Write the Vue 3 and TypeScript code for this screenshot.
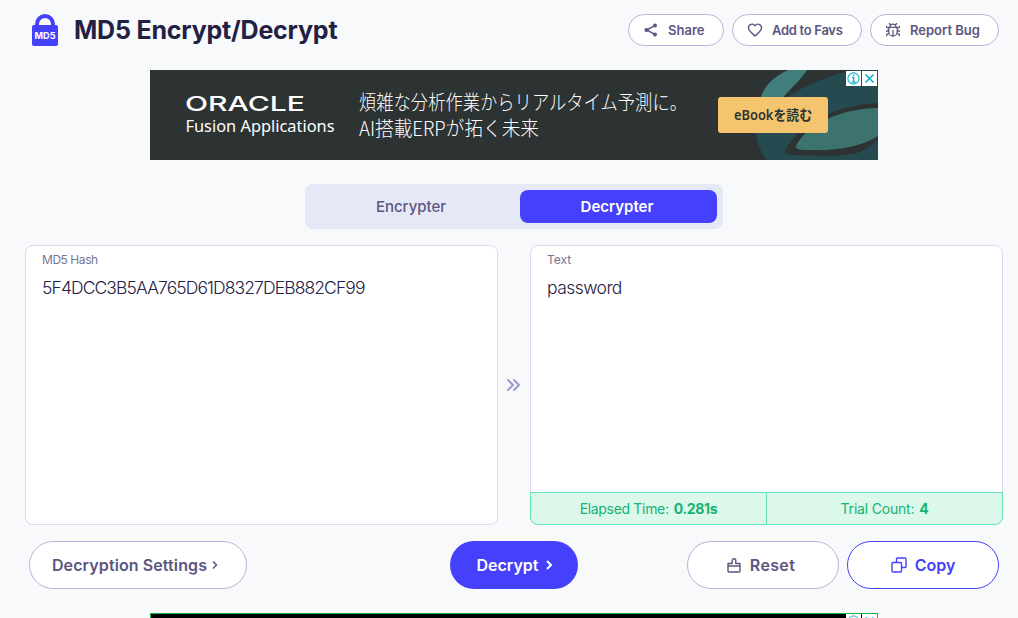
<script setup lang="ts">
import { ref } from 'vue'

type Mode = 'Encrypter' | 'Decrypter'
const modes: Mode[] = ['Encrypter', 'Decrypter']
const active = ref<Mode>('Decrypter')
const hash = ref('5F4DCC3B5AA765D61D8327DEB882CF99')
const result = ref('password')
</script>

<template>
  <div class="page">
    <header class="header">
      <svg class="logo" width="26" height="32" viewBox="0 0 26 32">
        <path d="M5 13V10a8 8 0 0 1 16 0V13" fill="none" stroke="#4540fb" stroke-width="4" />
        <rect y="11" width="26" height="21" rx="2" fill="#4540fb" />
        <text x="2.6" y="25.2" class="logo-text" textLength="21" lengthAdjust="spacingAndGlyphs">MD5</text>
      </svg>
      <h1 class="title">MD5 Encrypt/Decrypt</h1>
      <nav class="actions">
        <button class="pill share">
          <svg width="16" height="16" viewBox="0 0 16 16">
            <path d="M12 3.6 3.6 8 12 12.4" fill="none" stroke="currentColor" stroke-width="1.5" />
            <g fill="currentColor"><circle cx="12" cy="3.5" r="2" /><circle cx="3.4" cy="8" r="2" /><circle cx="12" cy="12.5" r="2" /></g>
          </svg>
          <span>Share</span>
        </button>
        <button class="pill favs">
          <svg width="16" height="16" viewBox="0 0 16 16" fill="none" stroke="currentColor" stroke-width="1.4" stroke-linejoin="round">
            <path d="M8 14C5 11.5 1.4 8.8 1.4 5.6A3.6 3.6 0 0 1 8 3.8a3.6 3.6 0 0 1 6.6 1.8C14.600 8.800 11 11.500 8 14Z" />
          </svg>
          <span>Add to Favs</span>
        </button>
        <button class="pill bug">
          <svg width="16" height="16" viewBox="0 0 16 16" fill="none" stroke="currentColor" stroke-width="1.3">
            <path d="M3.800 5.300h8.400v4.600a4.200 4.200 0 0 1-8.400 0ZM4.900 5.300a3.100 3.100 0 0 1 6.200 0M4 1.200l2 2M12 1.200l-2 2M8 8v6M3.800 6.700 1.600 5.200V3.800M12.200 6.700l2.200-1.500V3.800M1 9h2.800M12.200 9H15M4.200 11.200l-2.500 1.300v1.800M11.800 11.200l2.500 1.300v1.800" />
          </svg>
          <span>Report Bug</span>
        </button>
      </nav>
    </header>

    <section class="ad">
      <svg width="728" height="90" viewBox="0 0 728 90">
        <rect width="728" height="90" fill="#2d3232" />
        <path d="M728 0H704C664 8 619 32 606 58c0 13 4 24 11 32H728Z" fill="#254a50" />
        <path d="M638 0C620 9 612 18 609 35l17 1C638 20 652 9 657 0Z" fill="#417e7b" />
        <path d="M728 33C681 36 649 55 635 80c-2 7 14 5 38 6 27 0 44-5 55-10Z" fill="#2d3232" />
        <path d="M728 38c-42 1-72 18-82 38-1 3 3 4 11 4 30 1 54-3 71-14Z" fill="#3d736f" />
        <path d="M728 70v20H690C706 84 718 79 728 70Z" fill="#254a50" />
        <text x="35" y="41" class="oracle" textLength="120" lengthAdjust="spacingAndGlyphs">ORACLE</text>
        <text x="35.500" y="61.500" class="fusion" textLength="149" lengthAdjust="spacingAndGlyphs">Fusion Applications</text>
        <text x="209" y="39.500" class="copy" textLength="328" lengthAdjust="spacingAndGlyphs">煩雑な分析作業からリアルタイム予測に。</text>
        <text x="209" y="66" class="copy" textLength="180" lengthAdjust="spacingAndGlyphs">AI搭載ERPが拓く未来</text>
        <rect x="568" y="27" width="110" height="36" rx="3" fill="#f4c56e" />
        <text x="584" y="50" class="ebook" textLength="78" lengthAdjust="spacingAndGlyphs">eBookを読む</text>
        <path d="M696 1h15v15h-15ZM712 1h15v15h-15Z" fill="#fff" />
        <g fill="none" stroke="#18aec9">
          <circle cx="703.500" cy="8.500" r="5.600" stroke-width="1.100" />
          <path d="M702 7.500h1.700V12M702 12h3.500M703.700 4.600v1.500" stroke-width="1.300" />
          <path d="m715.500 4.500 8 8m0-8-8 8" stroke-width="1.700" />
        </g>
      </svg>
    </section>

    <div class="tabs">
      <button v-for="m in modes" :key="m" class="tab" :class="{ active: m === active }" @click="active = m">{{ m }}</button>
    </div>

    <main class="panels">
      <section class="panel">
        <div class="label">MD5 Hash</div>
        <div class="value hash">{{ hash }}</div>
      </section>
      <svg class="arrows" width="14" height="14" viewBox="0 0 14 14" fill="none" stroke="#9f9bcb" stroke-width="2" stroke-linecap="round" stroke-linejoin="round">
        <path d="m1 2 5 5-5 5M7 2l5 5-5 5" />
      </svg>
      <section class="panel output">
        <div class="label text-label">Text</div>
        <div class="value password">{{ result }}</div>
        <div class="stats">
          <div class="stat"><span class="elapsed">Elapsed Time:</span><b>0.281s</b></div>
          <div class="stat"><span class="trial">Trial Count:</span><b>4</b></div>
        </div>
      </section>
    </main>

    <footer class="footer">
      <button class="big settings">
        <span>Decryption Settings</span>
        <svg width="6" height="10" viewBox="0 0 6 10" fill="none" stroke="currentColor" stroke-width="1.500"><path d="m1 1.500 3.500 3.500L1 8.500" /></svg>
      </button>
      <button class="big decrypt">
        <span>Decrypt</span>
        <svg width="7" height="10" viewBox="0 0 7 10" fill="none" stroke="currentColor" stroke-width="2"><path d="m1 1 4 4-4 4" /></svg>
      </button>
      <button class="big reset">
        <svg width="14" height="15" viewBox="0 0 14 15" fill="none" stroke="currentColor" stroke-width="1.400" stroke-linejoin="round">
          <path d="M1 8V5.500h4.200V2.500a1.800 1.800 0 0 1 3.600 0v3H13V8ZM1 8v5a1 1 0 0 0 1 1h10a1 1 0 0 0 1-1V8" />
        </svg>
        <span>Reset</span>
      </button>
      <button class="big copy-btn">
        <svg width="16" height="16" viewBox="0 0 16 16" fill="none" stroke="currentColor" stroke-width="1.400">
          <rect x="1" y="5.500" width="9.500" height="9.500" rx="1" /><path d="M5.500 5.500V2a1 1 0 0 1 1-1H14a1 1 0 0 1 1 1v7.500a1 1 0 0 1-1 1h-3.500" />
        </svg>
        <span>Copy</span>
      </button>
    </footer>

    <section class="bottom-ad">
      <svg width="31" height="16" viewBox="0 0 31 16">
        <path d="M0 0h15v16H0ZM16 0h15v16H16Z" fill="#fff" />
        <g fill="none" stroke="#18aec9"><circle cx="7.500" cy="7.500" r="5.600" /><path d="m19.500 3.500 8 8m0-8-8 8" stroke-width="1.700" /></g>
      </svg>
    </section>
  </div>
</template>

<style>
html, body { background: #f7f9fb; overflow: hidden; }
</style>

<style scoped>
* { box-sizing: border-box; }
.page { height: 618px; overflow: hidden; display: flex; flex-direction: column; font-family: Inter, "Noto Sans", sans-serif; background: #f7f9fb; color: #5b567f; }
.page > * { flex: none; }
.header { height: 70px; padding: 14px 19px 0 32px; display: flex; align-items: flex-start; }
.logo-text { font: 700 9px Inter, sans-serif; fill: #fff; }
.title { margin: 0 0 0 16px; font: 700 25px/32px Inter, sans-serif; letter-spacing: -0.2px; color: #232143; white-space: nowrap; }
.actions { margin-left: auto; display: flex; gap: 8px; }
button { font-family: inherit; color: inherit; margin: 0; white-space: nowrap; }
.pill { height: 32px; border: 1px solid #b8b3dd; border-radius: 16px; background: #fff; padding: 0 0 0 14px; display: flex; align-items: center; gap: 9px; font-size: 13px; font-weight: 600; }
.share { width: 96px; }
.favs { width: 130px; letter-spacing: -0.3px; }
.bug { width: 129px; }
.ad { width: 728px; height: 90px; margin-left: 150px; }
.ad svg { display: block; }
.oracle { font: 500 20.5px Inter, sans-serif; fill: #fff; }
.fusion { font: 400 17px "Noto Sans", sans-serif; fill: #fff; }
.copy { font: 300 20px "Noto Sans CJK JP", sans-serif; fill: #fff; }
.ebook { font: 600 14px "Noto Sans", "Noto Sans CJK JP", sans-serif; fill: #2d3232; }
.tabs { width: 418px; height: 45px; margin: 24px 0 0 305px; padding: 6px; border-radius: 8px; background: #e5e8f7; display: grid; grid-template-columns: 197px 197px; justify-content: space-between; }
.tab { border: 0; border-radius: 8px; background: none; padding: 0 0 0 3px; font-size: 15px; font-weight: 500; }
.tab.active { background: #4540fb; color: #fff; font-weight: 600; padding: 0 3px 0 0; }
.panels { height: 280px; margin: 16px 15px 0 25px; display: flex; align-items: stretch; }
.panel { width: 473px; border: 1px solid #dcd9ef; border-radius: 8px; background: #fff; padding: 5px 16px 0; display: flex; flex-direction: column; }
.label { font-size: 12px; line-height: 18px; letter-spacing: -0.45px; color: #777394; }
.text-label { letter-spacing: 0; }
.value { margin-top: 6px; font-size: 17.5px; line-height: 26px; color: #232143; font-weight: 350; }
.hash { letter-spacing: -0.9px; }
.password { letter-spacing: -0.55px; }
.arrows { margin: 0 9px; align-self: center; flex: none; }
.stats { margin: auto -17px -1px; height: 33px; display: flex; border: 1px solid #64e4b5; border-radius: 0 0 8px 8px; background: #dcf8eb; color: #14b374; font-size: 14px; }
.stat { flex: 1; display: flex; align-items: center; justify-content: center; gap: 5px; }
.stat + .stat { border-left: 1px solid #64e4b5; }
.elapsed { letter-spacing: -0.32px; }
.trial { letter-spacing: -0.2px; }
.stat b { letter-spacing: -0.3px; }
.footer { height: 48px; margin: 16px 19px 0 29px; display: flex; }
.big { height: 48px; border: 1px solid #b8b3dd; border-radius: 24px; background: #fff; padding: 0; display: flex; align-items: center; justify-content: center; gap: 8px; font-size: 16px; font-weight: 600; }
.settings { width: 218px; gap: 5px; padding-right: 6px; letter-spacing: 0.1px; }
.decrypt { width: 128px; margin-left: 203px; border: 0; background: #4540fb; color: #fff; padding-left: 2px; }
.reset { width: 152px; margin-left: 109px; padding-right: 4px; gap: 9px; letter-spacing: 0.35px; }
.copy-btn { width: 152px; margin-left: 8px; border-color: #4540fb; color: #4540fb; }
.bottom-ad { width: 728px; height: 90px; margin: 24px 0 0 150px; background: #000; border: 1px solid #18b548; display: flex; justify-content: flex-end; }
</style>
